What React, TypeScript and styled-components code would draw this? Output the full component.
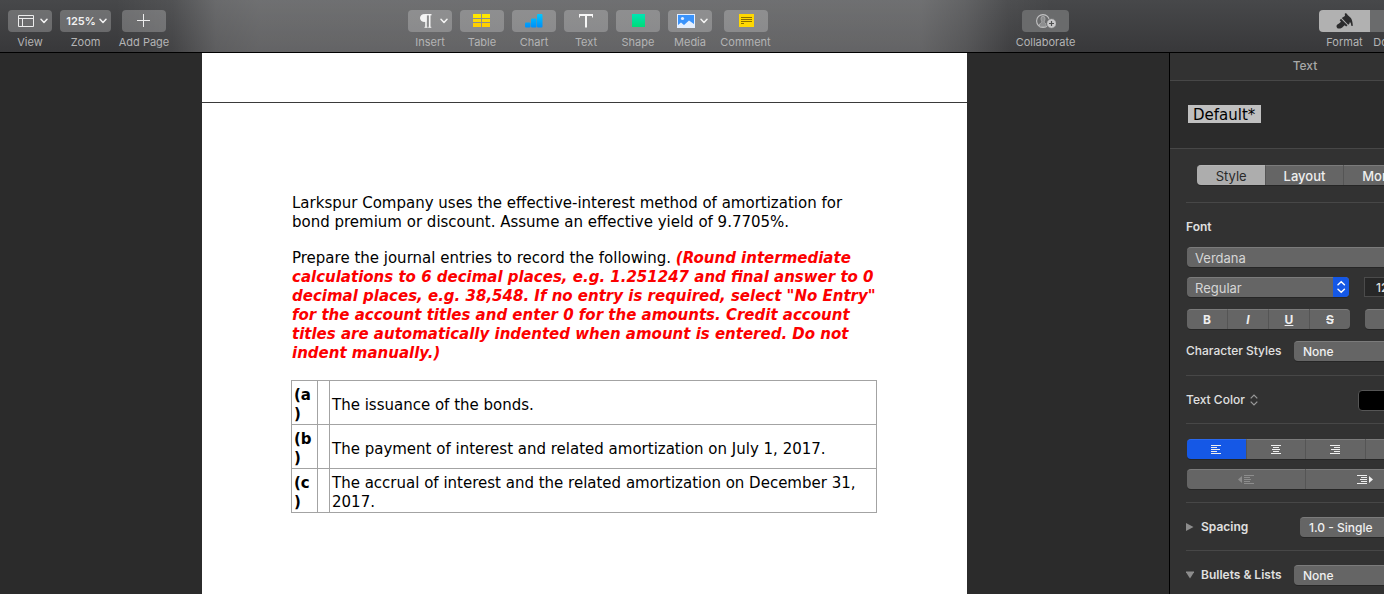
import React from "react";
import styled, { createGlobalStyle, css } from "styled-components";

const GlobalStyle = createGlobalStyle`
  *, *::before, *::after { box-sizing: border-box; }
  html, body { margin: 0; background: #2b2b2b; }
  body { overflow: hidden; font-family: Inter, "Liberation Sans", sans-serif; color: #e0e0e0; }
  button, input, select { font: inherit; color: inherit; margin: 0; }
`;

/* The window extends past the right edge of the view. */
const Shell = styled.div`
  display: flex;
  flex-direction: column;
  width: calc(100% + 56px);
  height: 100vh;
`;

const Toolbar = styled.header`
  display: flex;
  flex: none;
  height: 53px;
  padding: 10px 10px 0 8px;
  border-bottom: 1px solid #000;
  background:
    linear-gradient(90deg,
      rgba(255, 255, 255, 0) 8%,
      rgba(255, 255, 255, 0.06) 12%,
      rgba(255, 255, 255, 0.19) 15%,
      rgba(255, 255, 255, 0.22) 18%,
      rgba(255, 255, 255, 0.22) 64%,
      rgba(255, 255, 255, 0.15) 67%,
      rgba(255, 255, 255, 0.04) 70%,
      rgba(255, 255, 255, 0) 73%),
    linear-gradient(#47484a, #38383a);
`;

const Spacer = styled.div<{ $grow: number }>`
  flex: ${(p) => p.$grow} 0 0;
`;

const ToolGroup = styled.div`
  display: flex;
  flex: none;
  gap: 8px;
`;

const Tool = styled.label<{ $width?: number }>`
  display: flex;
  flex-direction: column;
  align-items: center;
  gap: 2px;
  width: ${(p) => p.$width ?? 44}px;
  font-size: 11px;
  line-height: 16px;
  color: #b4b4b5;
  white-space: nowrap;
`;

const ToolButton = styled.button<{ $width?: number; $dim?: boolean }>`
  display: flex;
  align-items: center;
  justify-content: center;
  width: ${(p) => p.$width ?? 44}px;
  height: 22px;
  padding: 0;
  border: 0;
  border-radius: 4px;
  background: ${(p) => (p.$dim ? "#6a6b6c" : "rgba(255, 255, 255, 0.23)")};
  color: #f2f2f2;
  font-size: 11px;
  font-weight: 600;
`;

const MenuButton = styled(ToolButton)`
  padding: 0 4px 0 3px;
`;

const MenuFace = styled.span`
  display: flex;
  flex: 1;
  justify-content: center;
`;

const ToolPair = styled.div`
  display: flex;
`;

const PairButton = styled(ToolButton)<{ $active?: boolean }>`
  border-radius: ${(p) => (p.$active ? "4px 0 0 4px" : "0 4px 4px 0")};
  background: ${(p) => (p.$active ? "#b1b1b1" : "#6a6b6c")};
`;

const Workspace = styled.div`
  display: flex;
  flex: 1;
  min-height: 0;
`;

const Canvas = styled.main`
  display: flex;
  flex: 1;
  justify-content: center;
  min-width: 0;
  overflow: hidden;
  background: #2b2b2b;
`;

const Paper = styled.article`
  width: 765px;
  background: #fff;
  color: #000;
  font-family: Verdana, "DejaVu Sans", sans-serif;
  font-size: 15px;
  line-height: 19px;
`;

const PageEnd = styled.div`
  height: 50px;
  border-bottom: 1px solid #3a3a3a;
`;

const PageBody = styled.div`
  padding: 91px 90px 0 90px;
`;

const Paragraph = styled.p`
  margin: 0 0 17px;
  white-space: nowrap;
`;

const Instruction = styled.strong`
  color: #fc0000;
  font-style: italic;
`;

const PartsTable = styled.table`
  width: 586px;
  margin-left: -1px;
  table-layout: fixed;
  border-collapse: collapse;
  th, td {
    padding: 5px 2px 0 2px;
    border: 1px solid #a3a3a3;
    text-align: left;
    vertical-align: middle;
  }
`;

const Inspector = styled.aside`
  flex: none;
  width: 271px;
  border-left: 1px solid #000;
  background: #323232;
  font-size: 12px;
  line-height: 16px;
  overflow: hidden;
`;

const InspectorTitle = styled.h2`
  margin: 0;
  height: 28px;
  padding-top: 5px;
  border-bottom: 1px solid #474747;
  color: #a8a8a8;
  font-size: 12px;
  line-height: 16px;
  font-weight: 500;
  text-align: center;
`;

const StylePreview = styled.div`
  height: 68px;
  padding: 24px 18px 0;
  border-bottom: 1px solid #474747;
  background: #2b2b2b;
`;

const StyleName = styled.button`
  display: block;
  height: 18px;
  padding: 1px 6px 0 5px;
  border: 0;
  background: #c0c0c0;
  color: #000;
  font: 15px/18px Verdana, "DejaVu Sans", sans-serif;
`;

const Section = styled.section<{ $pad: string }>`
  margin: 0 16px;
  padding: ${(p) => p.$pad};
  & + & { border-top: 1px solid #474747; }
`;

const Row = styled.div<{ $top?: number }>`
  display: flex;
  align-items: center;
  height: 20px;
  margin-top: ${(p) => p.$top ?? 0}px;
  padding-left: 1px;
`;

const LabelRow = styled(Row)`
  padding-left: 0;
`;

const FieldLabel = styled.label<{ $width?: number }>`
  flex: none;
  width: ${(p) => (p.$width ? p.$width + "px" : "auto")};
  font-weight: 500;
  white-space: nowrap;
`;

const Heading = styled.h3`
  margin: 0;
  font-size: 12px;
  line-height: 16px;
  font-weight: 600;
`;

const control = css`
  border: 0;
  border-top: 1px solid #7b7b7b;
  background: #656565;
  box-shadow: 0 1px 0 #262626;
`;

const Segments = styled.div`
  display: flex;
  flex: 1;
  height: 20px;
  border-radius: 4px;
`;

const Segment = styled.button<{ $on?: "grey" | "blue"; $grow?: number; $dim?: boolean }>`
  ${control}
  display: flex;
  align-items: center;
  justify-content: center;
  flex: ${(p) => p.$grow ?? 1} 0 0;
  padding: 0;
  color: ${(p) => (p.$dim ? "#8d8d8d" : "#eee")};
  font-weight: 500;
  & + & { border-left: 1px solid #555; }
  &:first-child { border-radius: 4px 0 0 4px; }
  &:last-child { border-radius: 0 4px 4px 0; }
  ${(p) => p.$on === "grey" && css`background: #adadad; border-color: #b5b5b5; color: #2a2a2a; font-weight: 400;`}
  ${(p) => p.$on === "blue" && css`background: #1558e6; border-color: #2a69ee;`}
`;

const TabRow = styled(Segments)`
  margin: 0 11px;
  font-size: 13px;
`;

const Letters = styled(Segments)`
  flex: none;
  width: 163px;
  b, i, u, s { font-weight: 700; }
`;

const IconButton = styled.button`
  ${control}
  flex: 1;
  height: 20px;
  margin-left: 15px;
  border-radius: 4px;
`;

const SelectBox = styled.div<{ $width?: number }>`
  position: relative;
  display: flex;
  flex: ${(p) => (p.$width ? "none" : "1")};
  width: ${(p) => (p.$width ? p.$width + "px" : "auto")};
  svg { position: absolute; right: 0; top: 0; pointer-events: none; }
`;

const Select = styled.select<{ $large?: boolean }>`
  ${control}
  appearance: none;
  width: 100%;
  height: 20px;
  padding: 0 20px 0 ${(p) => (p.$large ? 8 : 9)}px;
  border-radius: 4px;
  color: ${(p) => (p.$large ? "#d6d6d6" : "#f0f0f0")};
  font-size: ${(p) => (p.$large ? 13 : 12)}px;
  font-weight: ${(p) => (p.$large ? 400 : 500)};
`;

const SizeInput = styled.input`
  flex: 1;
  min-width: 0;
  height: 20px;
  margin-left: 15px;
  padding: 0 11px;
  border: 1px solid #4b4b4b;
  background: #272727;
  font-weight: 500;
`;

const Swatch = styled.button`
  width: 66px;
  height: 21px;
  margin-left: auto;
  border: 1px solid #555;
  border-radius: 4px;
  background: #000;
`;

const Disclosure = styled.button`
  display: flex;
  align-items: center;
  gap: 7px;
  padding: 0;
  border: 0;
  background: none;
  font-weight: 600;
  white-space: nowrap;
`;

const DisclosureCell = styled.div<{ $width: number }>`
  flex: none;
  width: ${(p) => p.$width}px;
`;

const Chevron = () => (
  <svg width="8" height="6" viewBox="0 0 8 6" fill="none" stroke="#f2f2f2" strokeWidth="1.5" strokeLinecap="round" strokeLinejoin="round">
    <path d="M1 1.2 4 4.4 7 1.2" />
  </svg>
);

const ViewIcon = () => (
  <svg width="16" height="12" viewBox="0 0 16 12" fill="none" stroke="#ececec">
    <path d="M.5.5h15v11H.5zM.5 3.5h15M4.5 3.5v8" />
  </svg>
);

const PlusIcon = () => (
  <svg width="14" height="14" viewBox="0 0 14 14" stroke="#ececec">
    <path d="M6.500 0v13M0 6.500h13" />
  </svg>
);

const InsertIcon = () => (
  <svg width="12" height="14" viewBox="0 0 12 14" fill="none" stroke="#f4f4f4">
    <path d="M6 .5H4.200a3.600 3.400 0 0 0 0 7H6z" fill="#f4f4f4" />
    <path d="M5 .7h6.500" strokeWidth="1.400" />
    <path d="M6 1v12M9.700 1v12" strokeWidth="1.600" />
    <path d="M4.500 13.300h3M8.300 13.300h3" />
  </svg>
);

const TableIcon = () => (
  <svg width="18" height="14" viewBox="0 0 18 14" shapeRendering="crispEdges">
    <path d="M0 0h8v4H0zM9 0h8v4H9z" fill="#ffe600" />
    <path d="M0 5h8v3H0zM9 5h8v3H9z" fill="#ffdc00" />
    <path d="M0 9h8v4H0zM9 9h8v4H9z" fill="#ffd000" />
  </svg>
);

const ChartIcon = () => (
  <svg width="18" height="14" viewBox="0 0 18 14">
    <defs>
      <linearGradient id="bars" x1="0" y1="0" x2="0" y2="14" gradientUnits="userSpaceOnUse">
        <stop stopColor="#00c8ff" />
        <stop offset="1" stopColor="#008cf8" />
      </linearGradient>
    </defs>
    <g fill="url(#bars)">
      <rect x="0" y="8.500" width="5.500" height="5" rx="1" />
      <rect x="6" y="4.500" width="5.500" height="9" rx="1" />
      <rect x="12" y="0" width="5.500" height="13.500" rx="1" />
    </g>
  </svg>
);

const TextIcon = () => (
  <svg width="14" height="14" viewBox="0 0 14 14" fill="none" stroke="#f6f6f6" strokeWidth="2">
    <path d="M0 1h14M7 1v12.500" />
    <path d="M.5 1v2.500M13.500 1v2.500" strokeWidth="1" />
  </svg>
);

const ShapeIcon = () => (
  <svg width="14" height="14" viewBox="0 0 14 14">
    <defs>
      <linearGradient id="square" x1="0" y1="0" x2="0" y2="1">
        <stop stopColor="#00e5b4" />
        <stop offset="1" stopColor="#00dc78" />
      </linearGradient>
    </defs>
    <rect x="1" width="13" height="13" fill="url(#square)" />
  </svg>
);

const MediaIcon = () => (
  <svg width="18" height="14" viewBox="0 0 18 14">
    <rect width="18" height="14" fill="#e4efff" />
    <rect x="1" y="1" width="16" height="12" fill="#3a93fb" />
    <circle cx="5.500" cy="4.500" r="1.600" fill="#e4efff" />
    <path d="M1 13v-2l3-2.500 3 2.500 5-4.500 5 3.500v3z" fill="#e4efff" />
  </svg>
);

const CommentIcon = () => (
  <svg width="16" height="14" viewBox="0 0 16 14" shapeRendering="crispEdges">
    <rect x="1" width="15" height="13" fill="#ffd800" />
    <path d="M3 3.500h11M3 5.500h11M3 7.500h11M3 9.500h3" stroke="#8a6e00" />
  </svg>
);

const CollaborateIcon = () => (
  <svg width="20" height="15" viewBox="0 0 20 15" fill="none">
    <circle cx="7" cy="7" r="6.400" stroke="#c2c2c3" strokeWidth="1.100" />
    <path d="M5 4.500a2 2.300 0 0 1 4 0c0 1.800-.8 2.600-.8 3.400 0 1 1 1.500 2 2v3H3.500V10c1-.6 2.300-1.200 2.300-2.200C5.800 7 5 6.200 5 4.500z" fill="#8d8e8f" stroke="#b8b8b9" strokeWidth=".7" />
    <circle cx="15.500" cy="9.500" r="4.900" fill="#c9c9ca" stroke="#6a6b6c" />
    <path d="M15.500 7v5M13 9.500h5" stroke="#4f5051" strokeWidth="1.200" />
  </svg>
);

const BrushIcon = () => (
  <svg width="17" height="16" viewBox="0 0 17 16" fill="#2c2c2d">
    <path d="M.5 12.900c0-1.400 1.500-1.700 2.500-2.500l2-1.700-1.300-1.500 1.300-1.400 6.500 6.500-1.300 1.300-1.500-1.300-1.700 1.500C6 14.800 5.200 15.600 2.800 15.600 1.200 15.600.5 14.300.5 12.900z" />
    <path d="M5.800 5 8.900 3C9.300 2.200 8.200 1 9.200.3c1.200-.3 2.100.8 2.400 1.700l3.300 3c1.200 2 1.700 4.600 1.900 7.200 0 1-1.300 1.200-1.500.2l-.6-2.600-1-.6-.3 1.500-1.200 1.100z" />
  </svg>
);

const Stepper = () => (
  <svg width="16" height="20" viewBox="0 0 16 20" fill="none">
    <path d="M0 0h12a4 4 0 0 1 4 4v12a4 4 0 0 1-4 4H0z" fill="#1558e6" />
    <path d="M5 7.700 8.200 4.800l3.200 2.900M5 12.300l3.200 2.900 3.200-2.900" stroke="#fff" strokeWidth="1.500" strokeLinecap="round" />
  </svg>
);

const UpDown = () => (
  <svg width="8" height="12" viewBox="0 0 8 12" fill="none" stroke="#9b9b9b" strokeWidth="1.200">
    <path d="M.7 4.300 4 1l3.300 3.300M.7 7.700 4 11l3.300-3.300" />
  </svg>
);

const LINES = {
  left: "M0 .5h10M0 2.500h6M0 4.500h9M0 6.500h6M0 8.500h10",
  center: "M0 .5h10M2 2.500h6M1 4.500h8M2 6.500h6M0 8.500h10",
  right: "M0 .5h10M4 2.500h6M1 4.500h9M4 6.500h6M0 8.500h10",
};

const AlignIcon = ({ kind }: { kind: keyof typeof LINES }) => (
  <svg width="10" height="9" viewBox="0 0 10 9" stroke="currentColor">
    <path d={LINES[kind]} />
  </svg>
);

const OutdentIcon = () => (
  <svg width="16" height="9" viewBox="0 0 16 9">
    <path d="M0 4.500 4 1v7z" fill="currentColor" />
    <path d="M6 .5h10M6 2.500h6M6 4.500h7M6 6.500h6M6 8.500h10" stroke="currentColor" />
  </svg>
);

const IndentIcon = () => (
  <svg width="16" height="9" viewBox="0 0 16 9">
    <path d="M16 4.500 12 1v7z" fill="currentColor" />
    <path d="M0 .5h10M4 2.500h6M3 4.500h7M4 6.500h6M0 8.500h10" stroke="currentColor" />
  </svg>
);

const Triangle = ({ open }: { open?: boolean }) => (
  <svg width="8" height="8" viewBox="0 0 8 8" fill="#8c8c8c">
    <path d={open ? "M-.5 .5h9L4 7.500z" : "M0 0v8l7.500-4z"} />
  </svg>
);

const centreTools = [
  { label: "Insert", icon: <InsertIcon />, menu: true },
  { label: "Table", icon: <TableIcon /> },
  { label: "Chart", icon: <ChartIcon /> },
  { label: "Text", icon: <TextIcon /> },
  { label: "Shape", icon: <ShapeIcon /> },
  { label: "Media", icon: <MediaIcon />, menu: true },
  { label: "Comment", icon: <CommentIcon />, width: 51 },
];

const parts = [
  ["a", "The issuance of the bonds."],
  ["b", "The payment of interest and related amortization on July 1, 2017."],
  ["c", "The accrual of interest and the related amortization on December 31, 2017."],
];

export default function App() {
  return (
    <>
      <GlobalStyle />
      <Shell>
        <Toolbar>
          <ToolGroup>
            <Tool><MenuButton><MenuFace><ViewIcon /></MenuFace><Chevron /></MenuButton>View</Tool>
            <Tool $width={51}><MenuButton $width={51}><MenuFace>125%</MenuFace><Chevron /></MenuButton>Zoom</Tool>
            <Tool $width={50}><ToolButton><PlusIcon /></ToolButton>Add Page</Tool>
          </ToolGroup>
          <Spacer $grow={239} />
          <ToolGroup>
            {centreTools.map((t) => (
              <Tool key={t.label} $width={t.width}>
                {t.menu
                  ? <MenuButton><MenuFace>{t.icon}</MenuFace><Chevron /></MenuButton>
                  : <ToolButton>{t.icon}</ToolButton>}
                {t.label}
              </Tool>
            ))}
          </ToolGroup>
          <Spacer $grow={244} />
          <Tool $width={61}><ToolButton $width={47} $dim><CollaborateIcon /></ToolButton>Collaborate</Tool>
          <Spacer $grow={243} />
          <ToolPair>
            <Tool $width={51}><PairButton $width={51} $active><BrushIcon /></PairButton>Format</Tool>
            <Tool $width={60}><PairButton $width={60} />Document</Tool>
          </ToolPair>
        </Toolbar>
        <Workspace>
          <Canvas>
            <Paper>
              <PageEnd />
              <PageBody>
                <Paragraph>
                  Larkspur Company uses the effective-interest method of amortization for<br />
                  bond premium or discount. Assume an effective yield of 9.7705%.
                </Paragraph>
                <Paragraph>
                  Prepare the journal entries to record the following.{" "}
                  <Instruction>
                    (Round intermediate<br />
                    calculations to 6 decimal places, e.g. 1.251247 and final answer to 0<br />
                    decimal places, e.g. 38,548. If no entry is required, select "No Entry"<br />
                    for the account titles and enter 0 for the amounts. Credit account<br />
                    titles are automatically indented when amount is entered. Do not<br />
                    indent manually.)
                  </Instruction>
                </Paragraph>
                <PartsTable>
                  <colgroup>
                    <col style={{ width: 26 }} />
                    <col style={{ width: 12 }} />
                    <col />
                  </colgroup>
                  <tbody>
                    {parts.map(([key, text]) => (
                      <tr key={key}>
                        <th scope="row">({key}<br />)</th>
                        <td />
                        <td>{text}</td>
                      </tr>
                    ))}
                  </tbody>
                </PartsTable>
              </PageBody>
            </Paper>
          </Canvas>
          <Inspector>
            <InspectorTitle>Text</InspectorTitle>
            <StylePreview><StyleName>Default*</StyleName></StylePreview>
            <Section $pad="16px 0 17px">
              <TabRow>
                <Segment $on="grey" $grow={69}>Style</Segment>
                <Segment $grow={77}>Layout</Segment>
                <Segment $grow={70}>More</Segment>
              </TabRow>
            </Section>
            <Section $pad="16px 0 14px">
              <Heading>Font</Heading>
              <Row $top={12}>
                <SelectBox><Select $large aria-label="Font family"><option>Verdana</option></Select></SelectBox>
              </Row>
              <Row $top={10}>
                <SelectBox $width={162}>
                  <Select $large aria-label="Typeface"><option>Regular</option></Select>
                  <Stepper />
                </SelectBox>
                <SizeInput aria-label="Font size" defaultValue="12 pt" />
              </Row>
              <Row $top={12}>
                <Letters>
                  <Segment><b>B</b></Segment>
                  <Segment><i>I</i></Segment>
                  <Segment><u>U</u></Segment>
                  <Segment><s>S</s></Segment>
                </Letters>
                <IconButton aria-label="Advanced options" />
              </Row>
              <LabelRow $top={12}>
                <FieldLabel htmlFor="charstyle" $width={108}>Character Styles</FieldLabel>
                <SelectBox><Select id="charstyle"><option>None</option></Select></SelectBox>
              </LabelRow>
            </Section>
            <Section $pad="14px 0 13px">
              <LabelRow>
                <FieldLabel htmlFor="textcolor" $width={64}>Text Color</FieldLabel>
                <UpDown />
                <Swatch id="textcolor" />
              </LabelRow>
            </Section>
            <Section $pad="15px 0 13px">
              <Row>
                <Segments>
                  <Segment $on="blue" aria-label="Align left"><AlignIcon kind="left" /></Segment>
                  <Segment aria-label="Center"><AlignIcon kind="center" /></Segment>
                  <Segment aria-label="Align right"><AlignIcon kind="right" /></Segment>
                  <Segment aria-label="Justify"><AlignIcon kind="left" /></Segment>
                </Segments>
              </Row>
              <Row $top={10}>
                <Segments>
                  <Segment $dim aria-label="Decrease indent"><OutdentIcon /></Segment>
                  <Segment aria-label="Increase indent"><IndentIcon /></Segment>
                </Segments>
              </Row>
            </Section>
            <Section $pad="14px 0 13px">
              <LabelRow>
                <DisclosureCell $width={114}><Disclosure><Triangle />Spacing</Disclosure></DisclosureCell>
                <SelectBox><Select aria-label="Line spacing"><option>1.0 - Single</option></Select></SelectBox>
              </LabelRow>
            </Section>
            <Section $pad="14px 0 8px">
              <LabelRow>
                <DisclosureCell $width={108}><Disclosure><Triangle open />Bullets &amp; Lists</Disclosure></DisclosureCell>
                <SelectBox><Select aria-label="List style"><option>None</option></Select></SelectBox>
              </LabelRow>
            </Section>
          </Inspector>
        </Workspace>
      </Shell>
    </>
  );
}
